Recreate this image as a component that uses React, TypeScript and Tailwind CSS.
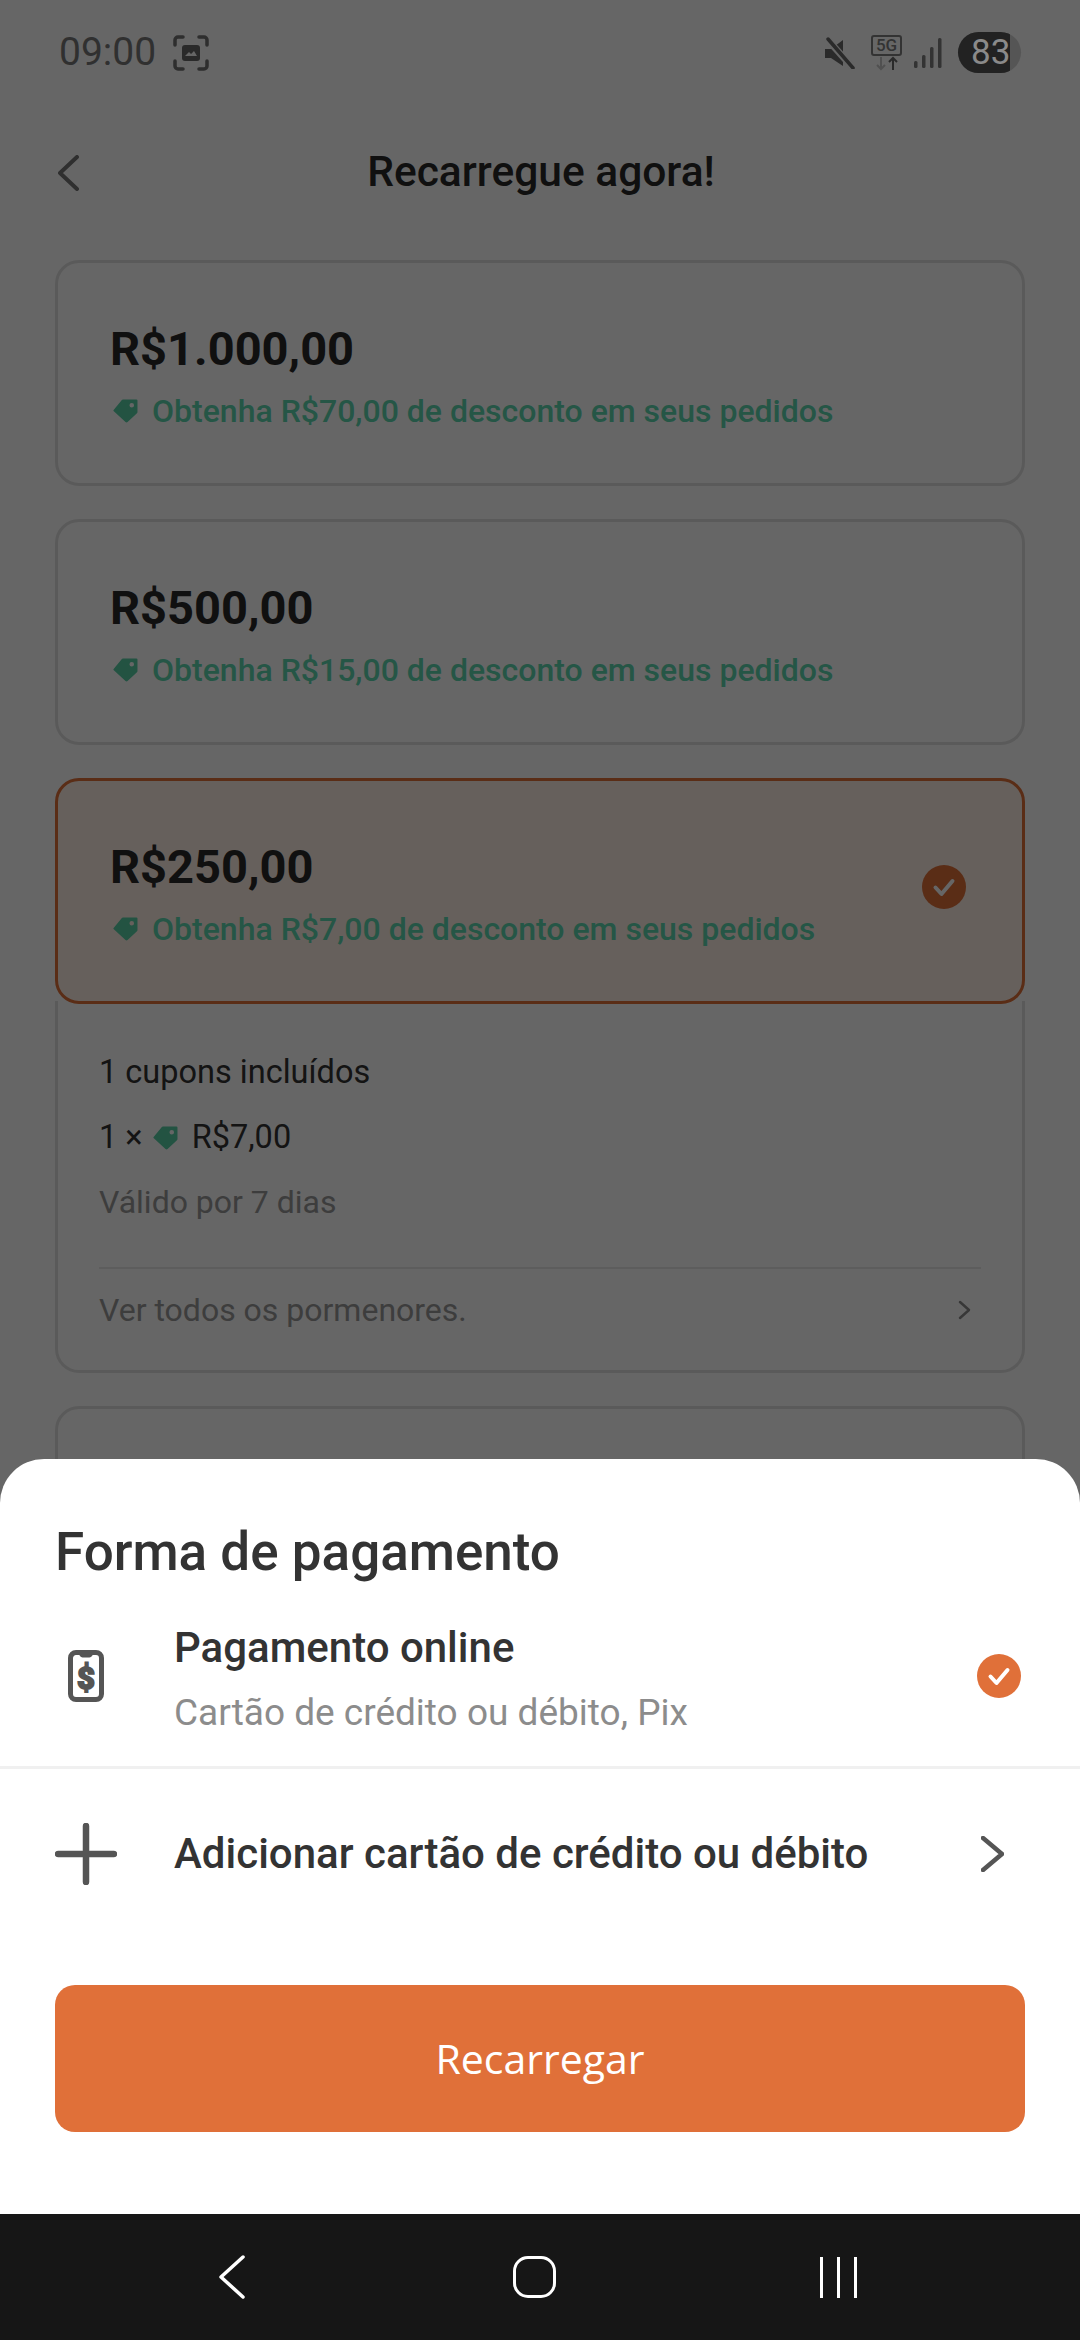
const roboto = "font-['Roboto',sans-serif]";

function TagIcon({ size = 25 }: { size?: number }) {
  return (
    <svg width={size} height={size} viewBox="0 0 24 24" className="shrink-0">
      <path
        fillRule="evenodd"
        fill="#58cfa6"
        d="M9.500 1.500H22.500a1 1 0 0 1 1 1V13.500a1.500 1.500 0 0 1-.5 1.100l-9 8.500a1.500 1.500 0 0 1-2 0L.8 12.800a1 1 0 0 1 0-1.500L8.500 2a1.500 1.500 0 0 1 1-.5zM18 4.800a2.200 2.200 0 1 0 0 4.400 2.200 2.200 0 0 0 0-4.400z"
      />
    </svg>
  );
}

function CheckCircle({ bg }: { bg: string }) {
  return (
    <svg width="44" height="44" viewBox="0 0 44 44" className="shrink-0">
      <circle cx="22" cy="22" r="22" fill={bg} />
      <path d="M13.500 22.500l6 6.500 11-13" fill="none" stroke="#fff" strokeWidth="4" strokeLinecap="round" strokeLinejoin="round" />
    </svg>
  );
}

function Chevron({ w, h, color, sw, left = false }: { w: number; h: number; color: string; sw: number; left?: boolean }) {
  const path = left ? `M${w - 2} 2L2 ${h / 2}L${w - 2} ${h - 2}` : `M2 2L${w - 2} ${h / 2}L2 ${h - 2}`;
  return (
    <svg width={w} height={h} viewBox={`0 0 ${w} ${h}`} className="shrink-0">
      <path d={path} fill="none" stroke={color} strokeWidth={sw} strokeLinecap="round" strokeLinejoin="round" />
    </svg>
  );
}

function StatusBar() {
  return (
    <div className="relative z-20 flex h-[105px] items-start justify-between pl-[59px] pr-[59px] pt-[32px]">
      <div className="flex h-[41px] items-center gap-[17px]">
        <span className="text-[39px] leading-none text-[#303030]">09:00</span>
        <svg width="36" height="36" viewBox="0 0 36 36">
          <path d="M2 10V5a3 3 0 0 1 3-3h5M26 2h5a3 3 0 0 1 3 3v5M34 26v5a3 3 0 0 1-3 3h-5M10 34H5a3 3 0 0 1-3-3v-5" fill="none" stroke="#2e2e2e" strokeWidth="3.500" strokeLinecap="round" />
          <rect x="9" y="10" width="18" height="16" rx="3" fill="#2a2a2a" />
          <path d="M12 21l4-4 2 2 3-3 3 5z" fill="#666" />
        </svg>
      </div>
      <div className="flex h-[41px] items-center">
        <svg width="32" height="32" viewBox="0 0 32 32" className="mr-[16px]">
          <path d="M2 12h6l12-9v26L8 21H2z" fill="#2a2a2a" />
          <path d="M4 2l26 29" stroke="#666" strokeWidth="7" />
          <path d="M5 2l25 29" stroke="#2a2a2a" strokeWidth="3.500" strokeLinecap="round" />
        </svg>
        <div className="mr-[11px] flex flex-col items-center">
          <span className="flex h-[21px] w-[31px] items-center justify-center rounded-[3px] border-2 border-[#333] text-[17px] font-medium leading-none text-[#333]">5G</span>
          <svg width="24" height="15" viewBox="0 0 24 15">
            <path d="M6 1v12M2 9l4 4 4-4" fill="none" stroke="#505050" strokeWidth="2" />
            <path d="M18 14V2M14 6l4-4 4 4" fill="none" stroke="#2a2a2a" strokeWidth="2" />
          </svg>
        </div>
        <svg width="30" height="30" viewBox="0 0 30 30" className="mr-[15px]">
          <rect x="1" y="23" width="3.500" height="7" rx="1.500" fill="#333" />
          <rect x="9" y="17" width="3.500" height="13" rx="1.500" fill="#333" />
          <rect x="17" y="9" width="3.500" height="21" rx="1.500" fill="#333" />
          <rect x="25" y="0" width="3.500" height="30" rx="1.500" fill="#333" />
        </svg>
        <div className="relative h-[41px] w-[63px] overflow-hidden rounded-full bg-[#555]">
          <div className="h-full w-[52px] bg-[#222]" />
          <span className="absolute left-[13px] top-[3px] text-[35px] leading-[36px] text-[#8a8a8a]">83</span>
        </div>
      </div>
    </div>
  );
}

function OfferCard({ price, discount, selected = false }: { price: string; discount: string; selected?: boolean }) {
  return (
    <div className={`flex h-[226px] items-center justify-between rounded-[24px] border-[3px] pl-[52px] pr-[56px] ${selected ? "border-[#e07039] bg-[#fff0e6]" : "border-[#e2e2e2] bg-white"}`}>
      <div className="flex flex-col gap-[15px] pt-[4px]">
        <div className="text-[47px] font-bold leading-[56px] text-[#2a2a2a]">{price}</div>
        <div className="ml-[3px] flex items-center gap-[14px] text-[32px] font-medium leading-[38px] text-[#5ed6ae]">
          <TagIcon />
          <span>{discount}</span>
        </div>
      </div>
      {selected && <div className="-mt-[9px]"><CheckCircle bg="#e07039" /></div>}
    </div>
  );
}

export default function App() {
  return (
    <div className={`relative h-[2340px] w-[1080px] overflow-hidden bg-white ${roboto}`}>
      <StatusBar />

      {/* page under the dim layer */}
      <div className="grid h-[155px] grid-cols-[1fr_auto_1fr] items-center pb-[20px] pl-[58px]">
        <Chevron w={21} h={36} color="#757575" sw={4} left />
        <span className="pr-[56px] text-[42.5px] font-medium leading-none text-[#2a2a2a]">Recarregue agora!</span>
        <div />
      </div>

      <div className="flex flex-col gap-[33px] px-[55px]">
        <OfferCard price="R$1.000,00" discount="Obtenha R$70,00 de desconto em seus pedidos" />
        <OfferCard price="R$500,00" discount="Obtenha R$15,00 de desconto em seus pedidos" />
        <div>
          <OfferCard selected price="R$250,00" discount="Obtenha R$7,00 de desconto em seus pedidos" />
          <div className="-mt-[3px] h-[372px] rounded-b-[24px] border-[3px] border-t-0 border-[#e2e2e2] px-[41px] pt-[51px]">
            <div className="text-[32.500px] leading-[40px] text-[#333]">1 cupons incluídos</div>
            <div className="mt-[25px] flex items-center text-[32.500px] leading-[40px] text-[#333]">
              <span>1 ×</span>
              <div className="ml-[10px] mr-[14px]"><TagIcon size={25} /></div>
              <span>R$7,00</span>
            </div>
            <div className="mt-[25px] text-[32px] leading-[40px] text-[#999]">Válido por 7 dias</div>
            <div className="mt-[45px] flex items-center justify-between border-t-[2px] border-[#e8e8e8] pr-[10px] pt-[21px]">
              <span className="text-[32px] leading-[40px] text-[#999]">Ver todos os pormenores.</span>
              <Chevron w={13} h={20} color="#8a8a8a" sw={2.5} />
            </div>
          </div>
        </div>
        <div className="h-[200px] rounded-[24px] border-[3px] border-[#e2e2e2]" />
      </div>

      {/* dim layer */}
      <div className="absolute inset-0 z-10 bg-black/60" />

      {/* bottom sheet */}
      <div className="absolute bottom-0 left-0 right-0 z-20">
        <div className="h-[755px] rounded-t-[44px] bg-white pt-[63px]">
          <div className="px-[55px] text-[53px] font-medium leading-[60px] text-[#333]">Forma de pagamento</div>
          <div className="mt-[4px] flex h-[183px] items-center justify-between border-b-[3px] border-[#f0f0f0] pl-[68px] pr-[59px]">
            <div className="flex items-center">
              <svg width="36" height="52" viewBox="0 0 36 52" className="shrink-0">
                <path d="M8 2.500h20a5.500 5.500 0 0 1 5.500 5.500v36a5.500 5.500 0 0 1-5.500 5.500H8A5.500 5.500 0 0 1 2.500 44V8A5.500 5.500 0 0 1 8 2.500z" fill="none" stroke="#555" strokeWidth="5" />
                <path d="M10 3h16l-2 3a3 3 0 0 1-2.500 1.500h-7A3 3 0 0 1 12 6z" fill="#555" />
                <text x="18" y="39" textAnchor="middle" fontSize="31" fontWeight="900" fill="#555" stroke="#555" strokeWidth="1.800" fontFamily="Roboto, sans-serif">$</text>
              </svg>
              <div className="ml-[70px] pt-[5px]">
                <div className="text-[42px] font-medium leading-[50px] text-[#333]">Pagamento online</div>
                <div className="mt-[18px] text-[37px] leading-[44px] text-[#8c8c8c]">Cartão de crédito ou débito, Pix</div>
              </div>
            </div>
            <CheckCircle bg="#e07039" />
          </div>
          <div className="flex h-[170px] items-center justify-between pl-[55px] pr-[76px]">
            <div className="flex items-center">
              <svg width="62" height="62" viewBox="0 0 62 62" className="shrink-0">
                <path d="M31 3v56M3 31h56" stroke="#555" strokeWidth="6.500" strokeLinecap="round" />
              </svg>
              <span className="ml-[57px] text-[42px] font-medium leading-none text-[#333]">Adicionar cartão de crédito ou débito</span>
            </div>
            <Chevron w={23} h={36} color="#555" sw={4.500} />
          </div>
          <div className="mt-[46px] px-[55px]">
            <button className="flex h-[147px] w-full items-center justify-center rounded-[20px] bg-[#e07039] font-['Open_Sans',sans-serif] text-[41px] font-medium leading-none text-white">
              Recarregar
            </button>
          </div>
        </div>
        <div className="flex h-[126px] items-center justify-between bg-[#161616] pl-[219px] pr-[223px]">
          <Chevron w={26} h={44} color="#fff" sw={3.500} left />
          <div className="ml-[4px] h-[42px] w-[43px] rounded-[15px] border-[3.500px] border-white" />
          <div className="flex gap-[14px]">
            <div className="h-[41px] w-[3px] bg-white" />
            <div className="h-[41px] w-[3px] bg-white" />
            <div className="h-[41px] w-[3px] bg-white" />
          </div>
        </div>
      </div>
    </div>
  );
}
